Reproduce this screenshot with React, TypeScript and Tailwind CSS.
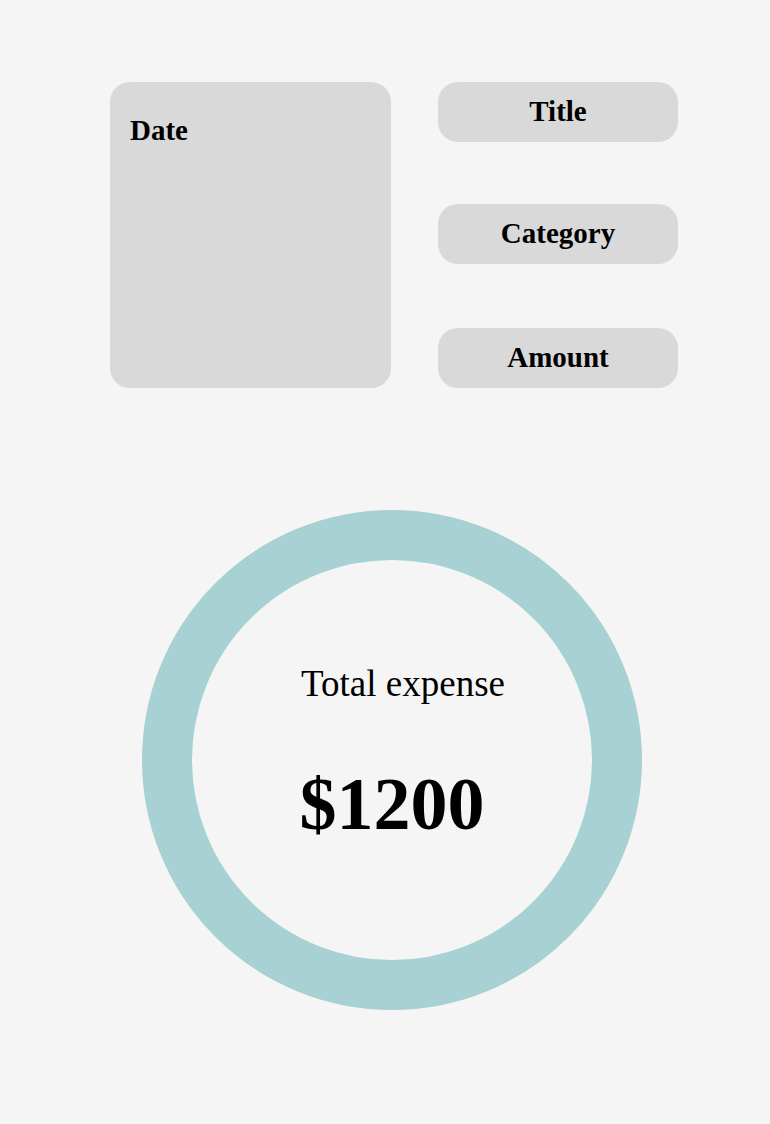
import React from "react";

export default function App() {
  const slab = { fontFamily: '"Liberation Serif", "DejaVu Serif", serif' };
  return (
    <div className="w-[770px] h-[1124px] bg-[#f5f5f5] flex flex-col items-start" style={slab}>
      <div className="flex mt-[82px] ml-[110px] gap-[47px]">
        <div className="w-[281px] h-[306px] rounded-[20px] bg-[#d9d9d9] pl-[20px] pt-[32px]">
          <div className="text-[29px] font-bold leading-[32px] text-black">Date</div>
        </div>
        <div className="flex flex-col w-[240px]">
          <div className="h-[60px] rounded-[20px] bg-[#d9d9d9] flex items-center justify-center text-[29px] font-bold text-black">Title</div>
          <div className="h-[60px] mt-[62px] rounded-[20px] bg-[#d9d9d9] flex items-center justify-center text-[29px] font-bold text-black">Category</div>
          <div className="h-[60px] mt-[64px] rounded-[20px] bg-[#d9d9d9] flex items-center justify-center text-[29px] font-bold text-black">Amount</div>
        </div>
      </div>
      <div className="mt-[122px] ml-[142px] w-[500px] h-[500px] rounded-full border-[50px] border-[#a7d1d2] flex flex-col items-center">
        <div className="mt-[104px] ml-[22px] text-[37px] leading-[40px] text-black">Total expense</div>
        <div className="mt-[60px] text-[74px] font-bold leading-[80px] text-black">$1200</div>
      </div>
    </div>
  );
}
